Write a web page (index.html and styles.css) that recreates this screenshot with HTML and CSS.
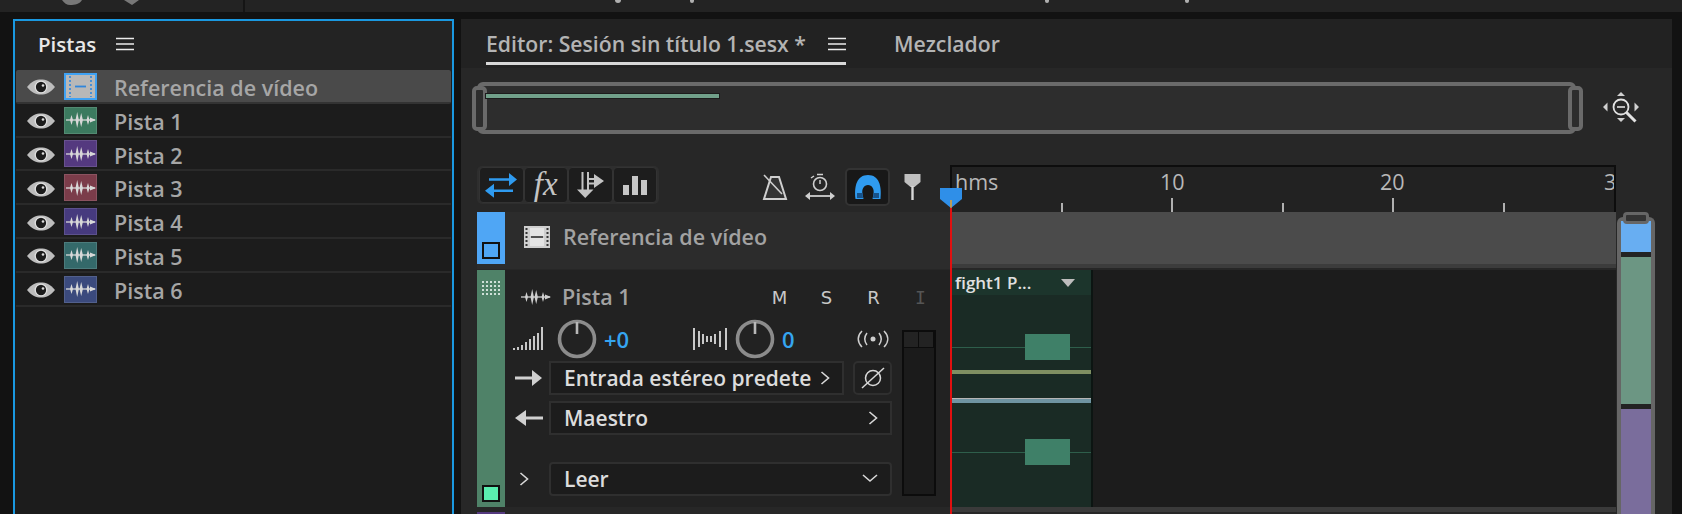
FILE: index.html
```html
<!DOCTYPE html>
<html lang="es">
<head>
<meta charset="utf-8">
<title>Editor</title>
<link rel="stylesheet" href="styles.css">
</head>
<body>
<svg width="0" height="0" class="defs">
  <defs>
    <symbol id="eye" viewBox="0 0 30 18"><path d="M1 9C6 3 10 1.500 15 1.500s9 1.500 14 7.500c-5 6-9 7.500-14 7.500S6 15 1 9z" fill="#bdbdbd"/><circle cx="15" cy="9" r="5.800" fill="#1c1c1c" stroke="#e0e0e0" stroke-width="1.300"/><circle cx="17" cy="7.500" r="1.300" fill="#ddd"/></symbol>
    <symbol id="wave" viewBox="0 0 32 16"><path d="M1 8h29" stroke="currentColor" stroke-width="1.300"/><path d="M31 8l-6-2.500v5zM5 8l1.500-5L8 8l-1.500 5zM10.500 8l1.700-8 1.700 8-1.700 8zM14.500 8l1.700-7 1.700 7-1.700 7zM21.500 8l1.500-5 1.500 5-1.500 5z" fill="currentColor"/></symbol>
    <symbol id="film" viewBox="0 0 26 24"><path d="M0 1h26v22H0z" fill="#cfcfcf"/><path d="M6 3h14v8H6zM6 13h14v8H6z" fill="#e4e4e4"/><path d="M7 12h12" stroke="#333" stroke-width="1.600"/><path d="M2.500 3v18M23.500 3v18" stroke="#333" stroke-width="2" stroke-dasharray="2 2"/></symbol>
    <symbol id="menu" viewBox="0 0 18 14"><path d="M0 1.500h18M0 7h18M0 12.500h18" stroke="#ececec" stroke-width="1.600"/></symbol>
    <symbol id="chev" viewBox="0 0 10 14"><path d="M1.500 1l7 6-7 6" fill="none" stroke="#d8d8d8" stroke-width="1.600"/></symbol>
    <symbol id="knob" viewBox="0 0 40 40"><circle cx="20" cy="20" r="17.500" fill="#222" stroke="#8c8c8c" stroke-width="3.600"/><path d="M20 3v12" stroke="#b8b8b8" stroke-width="2.600"/></symbol>
  </defs>
</svg>

<header class="topbar">
  <div class="top-left">
    <svg width="140" height="6" viewBox="0 0 140 6"><path d="M62 0h20c-2 4-7 5-12 5-3 0-6-2-8-5zM124 0h15l-7 5z" fill="#777"/></svg>
  </div>
  <span class="top-mark mark-a"></span>
  <span class="top-mark mark-b"></span>
  <span class="top-mark mark-c"></span>
  <span class="top-mark mark-d"></span>
</header>

<main class="workspace">
  <section class="panel tracks-panel">
    <div class="panel-head">
      <span class="panel-title">Pistas</span>
      <svg class="menu-icon"><use href="#menu"/></svg>
    </div>
    <ul class="track-list">
      <li class="track-row selected">
        <svg class="eye"><use href="#eye"/></svg>
        <span class="swatch swatch-video"><svg width="29" height="23" viewBox="0 0 29 23"><rect width="29" height="23" fill="#b8b8b8"/><path d="M4 1v21M25 1v21" stroke="#2f86dc" stroke-width="1.600" stroke-dasharray="2 2"/><path d="M9 11.500h11" stroke="#2f86dc" stroke-width="1.800"/></svg></span>
        <span class="track-name">Referencia de vídeo</span>
      </li>
      <li class="track-row"><svg class="eye"><use href="#eye"/></svg><span class="swatch c1"><svg class="wave"><use href="#wave"/></svg></span><span class="track-name">Pista 1</span></li>
      <li class="track-row"><svg class="eye"><use href="#eye"/></svg><span class="swatch c2"><svg class="wave"><use href="#wave"/></svg></span><span class="track-name">Pista 2</span></li>
      <li class="track-row"><svg class="eye"><use href="#eye"/></svg><span class="swatch c3"><svg class="wave"><use href="#wave"/></svg></span><span class="track-name">Pista 3</span></li>
      <li class="track-row"><svg class="eye"><use href="#eye"/></svg><span class="swatch c4"><svg class="wave"><use href="#wave"/></svg></span><span class="track-name">Pista 4</span></li>
      <li class="track-row"><svg class="eye"><use href="#eye"/></svg><span class="swatch c5"><svg class="wave"><use href="#wave"/></svg></span><span class="track-name">Pista 5</span></li>
      <li class="track-row"><svg class="eye"><use href="#eye"/></svg><span class="swatch c6"><svg class="wave"><use href="#wave"/></svg></span><span class="track-name">Pista 6</span></li>
    </ul>
  </section>

  <section class="panel editor-panel">
    <div class="tabs">
      <div class="tab active">
        <span>Editor: Sesión sin título 1.sesx *</span>
        <svg class="menu-icon"><use href="#menu"/></svg>
      </div>
      <div class="tab">Mezclador</div>
    </div>

    <div class="editor-body">
      <div class="overview-row">
        <div class="overview">
          <span class="ov-handle ov-left"></span>
          <span class="ov-clip"></span>
          <span class="ov-handle ov-right"></span>
        </div>
        <svg class="zoom-nav" width="36" height="31" viewBox="0 0 36 31"><path d="M18 0l4 4h-8zM18 30l-4-4h8zM0 15l4.500-4.500v9zM36 15l-4.500-4.500v9z" fill="#cfcfcf"/><circle cx="18" cy="15" r="7.500" fill="none" stroke="#e2e2e2" stroke-width="1.800"/><path d="M14 15h8" stroke="#e2e2e2" stroke-width="1.600"/><path d="M23.500 20.500l9 9" stroke="#e2e2e2" stroke-width="3"/></svg>
      </div>

      <div class="timeline">
        <div class="tracks-col">
          <div class="toolbar">
            <div class="btn-group">
              <button class="tool on"><svg width="32" height="25" viewBox="0 0 32 25"><path d="M4 6.500h21M28 17.700H8" stroke="#2f9bf0" stroke-width="2.400"/><path d="M24 0l8 6.500-8 6.500zM0 17.700l9-7v14z" fill="#2f9bf0"/></svg></button>
              <button class="tool fx">fx</button>
              <button class="tool"><svg width="27" height="26" viewBox="0 0 27 26"><path d="M5.500 0v18M11 0v18M11 7h7M11 11.500h7" stroke="#c4c4c4" stroke-width="2" fill="none"/><path d="M0 17.500h16.500L8.200 26zM17 2l10 7-10 7z" fill="#c4c4c4"/></svg></button>
              <button class="tool"><svg width="26" height="20" viewBox="0 0 26 20"><path d="M1 10h6v10H1zM10 1h6v19h-6zM19 5h6v15h-6z" fill="#c6c6c6"/></svg></button>
            </div>
            <div class="tool-right">
              <svg class="metronome" width="28" height="26" viewBox="0 0 28 26"><path d="M10 3h8l7 22H3z" fill="#333" stroke="#cfcfcf" stroke-width="2"/><path d="M3 1l18 19" stroke="#cfcfcf" stroke-width="1.600"/></svg>
              <svg width="32" height="28" viewBox="0 0 32 28"><circle cx="16" cy="11" r="6.500" fill="none" stroke="#cfcfcf" stroke-width="1.600"/><path d="M16 7v4M13 1.500h6M7 5l3-2" stroke="#cfcfcf" stroke-width="1.500"/><path d="M4 23h24" stroke="#cfcfcf" stroke-width="1.800"/><path d="M1 23l5-4v8zM31 23l-5-4v8z" fill="#cfcfcf"/></svg>
              <button class="snap"><svg width="28" height="26" viewBox="0 0 28 26"><path d="M1.500 25C0 12 3 1 14 1s14 11 12.500 24h-8l1-5c1-5-1.500-9-5.500-9s-6.500 4-5.500 9l1 5z" fill="#2f9bf0"/><path d="M3 19h5.500l.5 5H3zM19.500 19H25v5h-6z" fill="#17528a"/></svg></button>
              <svg width="19" height="28" viewBox="0 0 18 28"><path d="M1 1h16v8l-6 5H7L1 9z" fill="#c0c0c0"/><path d="M9 13v14" stroke="#d8d8d8" stroke-width="2.400"/></svg>
            </div>
          </div>

          <div class="head video-head">
            <div class="strip strip-blue"><span class="strip-box"></span></div>
            <svg class="film-icon"><use href="#film"/></svg>
            <span class="head-name">Referencia de vídeo</span>
          </div>

          <div class="head audio-head">
            <div class="strip strip-green"><span class="grip"></span><span class="strip-box green"></span></div>
            <div class="controls">
              <div class="ctl-title">
                <svg class="wave-title"><use href="#wave"/></svg>
                <span class="head-name small">Pista 1</span>
                <div class="msri"><span>M</span><span>S</span><span>R</span><span class="dim">I</span></div>
              </div>
              <div class="ctl-row">
                <div class="ctl-main">
                  <div class="ctl-knobs">
                    <svg class="signal" width="34" height="26" viewBox="0 0 34 26"><path d="M2 22v2M6 21v3M10 19v5M14 16v8M18 13v11M22 10v14M26 7v17M30 1v23" stroke="#c8c8c8" stroke-width="2"/></svg>
                    <svg class="knob"><use href="#knob"/></svg>
                    <span class="val val-vol">+0</span>
                    <svg width="36" height="26" viewBox="0 0 36 26"><path d="M2 2v22M7 5v16M11 8v10M15 10v6M19 10v6M23 8v10M28 5v16M34 2v22" stroke="#c8c8c8" stroke-width="2"/></svg>
                    <svg class="knob"><use href="#knob"/></svg>
                    <span class="val">0</span>
                    <svg class="monitor" width="34" height="18" viewBox="0 0 34 18"><circle cx="17" cy="9" r="2.500" fill="#cfcfcf"/><path d="M11 3c-3 4-3 8 0 12M23 3c3 4 3 8 0 12M6 1c-5 5-5 11 0 16M28 1c5 5 5 11 0 16" fill="none" stroke="#cfcfcf" stroke-width="1.500"/></svg>
                  </div>
                  <div class="ctl-route">
                    <svg width="30" height="18" viewBox="0 0 30 18"><path d="M1 9h20" stroke="#d0d0d0" stroke-width="3"/><path d="M18 1l10 8-10 8z" fill="#d0d0d0"/></svg>
                    <div class="field field-in"><span>Entrada estéreo predete</span><svg class="chev"><use href="#chev"/></svg></div>
                    <div class="phase"><svg width="24" height="22" viewBox="0 0 24 22"><circle cx="12" cy="11" r="7.500" fill="none" stroke="#d8d8d8" stroke-width="1.500"/><path d="M1 21L23 1" stroke="#d8d8d8" stroke-width="1.500"/></svg></div>
                  </div>
                  <div class="ctl-route">
                    <svg width="30" height="18" viewBox="0 0 30 18"><path d="M9 9h20" stroke="#d0d0d0" stroke-width="3"/><path d="M12 1L1 9l11 8z" fill="#d0d0d0"/></svg>
                    <div class="field field-out"><span>Maestro</span><svg class="chev"><use href="#chev"/></svg></div>
                  </div>
                  <div class="ctl-route ctl-auto">
                    <svg class="chev expand"><use href="#chev"/></svg>
                    <div class="field field-auto"><span>Leer</span><svg width="16" height="9" viewBox="0 0 16 9"><path d="M1 1l7 6 7-6" fill="none" stroke="#d8d8d8" stroke-width="1.600"/></svg></div>
                  </div>
                </div>
                <div class="meter"><div class="meter-top"><i></i><i></i></div></div>
              </div>
            </div>
          </div>
          <div class="head next-head"><div class="strip strip-purple"></div></div>
        </div>

        <div class="lanes-col">
          <div class="ruler">
            <span class="r-label r-hms">hms</span>
            <span class="r-label r-10">10</span>
            <span class="r-label r-20">20</span>
            <span class="r-label r-30">3</span>
            <i class="tick t1"></i><i class="tick big t2"></i><i class="tick t3"></i><i class="tick big t4"></i><i class="tick t5"></i>
          </div>
          <div class="lane-video"></div>
          <div class="lane-audio">
            <div class="clip">
              <div class="clip-head"><span>fight1 P...</span><i class="clip-arrow"></i></div>
              <div class="channel ch-top"><span class="env"></span><span class="blob"></span></div>
              <span class="clip-line-a"></span>
              <span class="clip-line-b"></span>
              <div class="channel ch-bottom"><span class="env"></span><span class="blob"></span></div>
            </div>
          </div>
          <div class="lane-sep"></div>
          <div class="playhead"><span class="playhead-cap"></span></div>
        </div>

        <div class="vscroll">
          <span class="vs-handle"></span>
          <span class="vs-seg vs-blue"></span>
          <span class="vs-seg vs-green"></span>
          <span class="vs-seg vs-purple"></span>
        </div>
      </div>
    </div>
  </section>
</main>
</body>
</html>
```

FILE: styles.css
```css
* { box-sizing: border-box; }
html, body { margin: 0; height: 514px; overflow: hidden; }
body { width: 1682px; background: #121212; font-family: "Open Sans", "Noto Sans", "Liberation Sans", sans-serif; color: #b5b5b5; }
.defs { display: block; height: 0; }
button { border: 0; padding: 0; font: inherit; color: inherit; background: none; }
svg { display: block; flex: none; }

.topbar { height: 12px; background: #232323; display: flex; overflow: hidden; }
.top-left { width: 245px; flex: none; border-right: 2px solid #151515; }
.top-mark { width: 6px; height: 3px; background: #b0b0b0; border-radius: 0 0 3px 3px; }
.mark-a { margin-left: 370px; }
.mark-b { margin-left: 69px; width: 4px; }
.mark-c { margin-left: 351px; width: 4px; }
.mark-d { margin-left: 136px; width: 4px; }

.workspace { display: flex; height: 502px; padding: 7px 0 0 13px; gap: 7px; overflow: hidden; }
.panel { background: #232323; }
.tracks-panel { width: 441px; border: 2px solid #1a98e0; border-bottom: 0; flex: none; display: flex; flex-direction: column; }
.panel-head { height: 49px; flex: none; display: flex; align-items: center; padding: 0 0 3px 23px; gap: 20px; }
.panel-title { font-size: 20.500px; font-weight: 600; color: #e8e8e8; }
.menu-icon { width: 18px; height: 14px; }

.track-list { list-style: none; margin: 0; padding: 0 1px; background: #1c1c1c; flex: 1; }
.track-row { height: 33.800px; display: flex; align-items: center; padding-left: 10px; border-bottom: 2px solid #2a2a2a; }
.track-row.selected { background: #4a4a4a; border-bottom-color: #333; border-radius: 2px; }
.eye { width: 30px; height: 18px; margin-top: 3px; }
.swatch { width: 33px; height: 27px; margin: 1px 0 0 8px; display: flex; align-items: center; justify-content: center; border: 1px solid rgba(255,255,255,.12); color: #d8d8d8; }
.swatch-video { border: 2px solid #3fa2f4; background: #b8b8b8; }
.c1 { background: #3c7a5f; } .c2 { background: #54397f; } .c3 { background: #7b3c4a; }
.c4 { background: #463a7e; } .c5 { background: #34696a; } .c6 { background: #3b4a7d; }
.wave { width: 32px; height: 16px; }
.track-name { font-size: 21.500px; font-weight: 600; color: #a6a6a6; margin: 3px 0 0 17px; white-space: nowrap; }

.editor-panel { flex: none; width: 1211px; display: flex; flex-direction: column; }
.tabs { height: 49px; flex: none; display: flex; padding-left: 25px; gap: 48px; font-size: 21.200px; color: #b4b4b4; background: #222; font-weight: 600; }
.tab { padding-top: 10px; white-space: nowrap; }
.tab.active { display: flex; justify-content: space-between; border-bottom: 3px solid #d8d8d8; height: 46px; width: 360px; }
.tab.active .menu-icon { margin-top: 8px; }
.editor-body { flex: 1; background: #272727; padding: 13px 0 0 16px; }

.overview-row { display: flex; gap: 27px; align-items: flex-start; height: 58px; }
.overview { position: relative; width: 1099px; height: 52px; border: 4px solid #6a6a6a; border-radius: 6px; background: #2d2d2d; margin-top: 1px; }
.zoom-nav { margin-top: 11px; }
.ov-handle { position: absolute; top: 0; width: 15px; height: 45px; background: #2d2d2d; border: 4px solid #6a6a6a; border-radius: 5px; }
.ov-left { left: -9px; } .ov-right { right: -11px; }
.ov-clip { position: absolute; left: 5px; top: 8px; width: 233px; height: 4px; background: #71a08a; box-shadow: 0 0 0 1px #1c1c1c; }

.timeline { display: flex; margin-top: 26px; height: 349px; overflow: hidden; }
.tracks-col { width: 473px; flex: none; }
.toolbar { height: 47px; display: flex; align-items: flex-start; justify-content: space-between; padding-top: 1px; }
.btn-group { display: flex; background: #2e2e2e; padding: 1px 2px; height: 38px; border-radius: 5px; width: 182px; }
.tool { width: 45px; height: 36px; background: #1d1d1d; display: flex; align-items: center; justify-content: center; border-radius: 4px; border: 1px solid #333; }
.tool.fx { font-family: "Liberation Serif", serif; font-style: italic; font-size: 33px; color: #c4c4c4; line-height: 32px; padding-bottom: 3px; }
.tool-right { display: flex; align-items: center; gap: 9px; padding-right: 28px; height: 40px; margin-top: 1px; }
.metronome { margin-right: 6px; }
.snap { width: 45px; height: 38px; background: #181818; border: 2px solid #333; border-radius: 5px; display: flex; align-items: center; justify-content: center; margin-right: 4px; }

.head { background: #2c2c2c; display: flex; }
.video-head { height: 57px; align-items: center; padding-bottom: 8px; }
.strip { width: 28px; flex: none; position: relative; }
.strip-blue { height: 52px; background: #4fa6f5; align-self: flex-start; }
.strip-box { position: absolute; left: 5px; bottom: 5px; width: 18px; height: 17px; border: 2px solid #111; }
.strip-box.green { background: #5aeeb0; }
.film-icon { width: 26px; height: 24px; margin-left: 19px; }
.head-name { font-size: 21.500px; font-weight: 600; color: #a2a2a2; margin-left: 13px; white-space: nowrap; }
.head-name.small { margin-left: 10px; }

.audio-head { height: 237px; background: #222; margin-top: 1px; }
.strip-green { background: #4f8268; height: 237px; }
.grip { position: absolute; left: 4px; top: 10px; width: 20px; height: 17px; background-image: radial-gradient(#cfe0d8 1px, transparent 1.200px); background-size: 4px 4px; }
.controls { flex: 1; padding-left: 6px; display: flex; flex-direction: column; }
.ctl-title { display: flex; align-items: center; height: 50px; padding: 3px 6px 0 9px; }
.wave-title { width: 32px; height: 16px; color: #cfcfcf; }
.msri { display: flex; margin-left: auto; font-family: "DejaVu Sans", sans-serif; font-size: 18px; color: #c8c8c8; padding-top: 1px; }
.msri .dim { color: #555; font-family: "DejaVu Sans Mono", monospace; }
.msri span { width: 47px; text-align: center; }
.ctl-row { display: flex; }
.ctl-main { width: 381px; flex: none; }
.ctl-knobs { display: flex; align-items: center; height: 37px; padding-left: 1px; }
.signal { margin-right: 4px; }
.knob { width: 40px; height: 40px; margin-left: 7px; }
.val { font-size: 22px; font-weight: 600; color: #35a5f0; margin-left: 7px; }
.val-vol { width: 88px; }
.monitor { margin: 0 2px 0 auto; }
.ctl-route { display: flex; align-items: center; gap: 5px; height: 39px; margin-top: 1px; padding-left: 3px; }
.field { height: 34px; background: #1c1c1c; border: 2px solid #2f2f2f; display: flex; align-items: center; justify-content: space-between; padding: 0 12px 0 13px; font-size: 21px; font-weight: 600; color: #dcdcdc; white-space: nowrap; }
.field-in { width: 295px; }
.field-out { width: 343px; }
.field-auto { width: 343px; border-radius: 4px; }
.chev { width: 10px; height: 14px; }
.phase { width: 39px; height: 34px; border: 2px solid #2f2f2f; border-radius: 5px; background: #1f1f1f; display: flex; align-items: center; justify-content: center; margin-left: 4px; }
.ctl-auto { margin-top: 22px; }
.ctl-auto .expand { margin: 0 15px 0 5px; }
.meter { width: 34px; height: 166px; border: 2px solid #0c0c0c; background: #1b1b1b; margin: 10px 0 0 10px; flex: none; }
.meter-top { display: flex; height: 16px; border-bottom: 1px solid #0c0c0c; }
.meter-top i { flex: 1; background: #232323; border-right: 1px solid #0c0c0c; }
.next-head { height: 7px; margin-top: 5px; background: #272727; }
.strip-purple { background: #54397f; height: 7px; }

.lanes-col { width: 666px; flex: none; position: relative; }
.ruler { height: 47px; background: #222; border: 2px solid #0d0d0d; border-bottom: 0; position: relative; overflow: hidden; font-size: 21.500px; color: #b8b8b8; }
.r-label { position: absolute; top: 0; }
.r-hms { left: 3px; } .r-10 { left: 208px; } .r-20 { left: 428px; } .r-30 { left: 652px; }
.tick { position: absolute; bottom: 0; width: 2px; height: 9px; background: #b0b0b0; }
.tick.big { height: 14px; }
.t1 { left: 109px; } .t2 { left: 219px; } .t3 { left: 330px; } .t4 { left: 440px; } .t5 { left: 551px; }
.lane-video { height: 56px; background: #4b4b4b; border-bottom: 4px solid #3c3c3c; }
.lane-audio { height: 237px; background: #1c1c1c; margin-top: 2px; }
.clip { width: 141px; height: 237px; background: #1a2b25; border-right: 2px solid #0c1512; margin-left: 2px; }
.clip-head { height: 25px; background: #1c352c; display: flex; align-items: center; justify-content: space-between; font-size: 17px; font-weight: 600; color: #e0e0e0; }
.clip-head span { margin: -1px 0 0 3px; }
.clip-arrow { width: 0; height: 0; margin-right: 16px; border-left: 7px solid transparent; border-right: 7px solid transparent; border-top: 8px solid #bdbdbd; }
.channel { position: relative; }
.ch-top { height: 75px; }
.ch-bottom { height: 104px; }
.env { position: absolute; left: 0; right: 0; height: 1px; background: #2e5e4b; }
.blob { position: absolute; left: 73px; width: 45px; height: 26px; background: #3f8068; }
.ch-top .env { top: 52px; } .ch-top .blob { top: 39px; }
.ch-bottom .env { top: 49px; } .ch-bottom .blob { top: 36px; }
.clip-line-a { display: block; height: 4px; background: #7f8f62; }
.clip-line-b { display: block; height: 5px; background: #6f94a2; border-top: 1px solid #b5b5b5; margin-top: 24px; }
.lane-sep { height: 5px; background: #3a3a3a; }
.playhead { position: absolute; left: 0; top: 23px; bottom: 0; width: 2px; background: #e01010; }
.playhead-cap { position: absolute; left: -10px; top: 0; width: 22px; height: 20px; background: #2f8fe8; clip-path: polygon(0 0, 100% 0, 100% 55%, 50% 100%, 0 55%); }
.playhead-cap::after { content: ""; position: absolute; left: 10px; top: 12px; width: 2px; height: 8px; background: #b89a5a; }

.vscroll { width: 38px; margin: 52px 0 0 1px; position: relative; border: 4px solid #666; border-bottom: 0; border-radius: 6px 6px 0 0; display: flex; flex-direction: column; height: 297px; background: #232323; }
.vs-handle { position: absolute; left: 2px; top: -9px; width: 26px; height: 12px; background: #333; border: 3px solid #666; border-radius: 4px; z-index: 1; }
.vs-seg { display: block; }
.vs-blue { height: 31px; background: #68aef2; }
.vs-green { height: 147px; background: #6c9683; margin-top: 5px; }
.vs-purple { flex: 1; background: #7a6d9c; margin-top: 5px; }
```
